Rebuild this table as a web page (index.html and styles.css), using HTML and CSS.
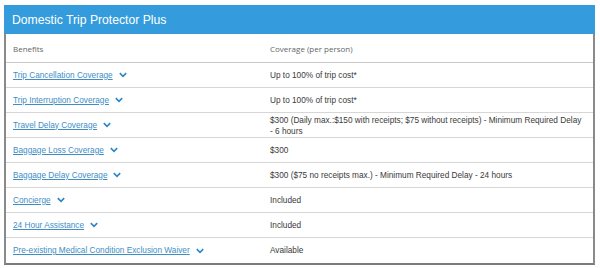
FILE: index.html
```html
<!DOCTYPE html>
<html>
<head>
<meta charset="utf-8">
<link rel="stylesheet" href="styles.css">
</head>
<body>
<div class="card">
  <div class="title">Domestic Trip Protector Plus</div>
  <div class="table">
    <div class="row head">
      <div class="c1">Benefits</div>
      <div class="c2">Coverage (per person)</div>
    </div>
    <div class="row">
      <div class="c1"><a href="#">Trip Cancellation Coverage</a><svg class="chev" viewBox="0 0 10 7"><path d="M1 1.2 L5 5.2 L9 1.2"/></svg></div>
      <div class="c2">Up to 100% of trip cost*</div>
    </div>
    <div class="row">
      <div class="c1"><a href="#">Trip Interruption Coverage</a><svg class="chev" viewBox="0 0 10 7"><path d="M1 1.2 L5 5.2 L9 1.2"/></svg></div>
      <div class="c2">Up to 100% of trip cost*</div>
    </div>
    <div class="row">
      <div class="c1"><a href="#">Travel Delay Coverage</a><svg class="chev" viewBox="0 0 10 7"><path d="M1 1.2 L5 5.2 L9 1.2"/></svg></div>
      <div class="c2 two">$300 (Daily max.:$150 with receipts; $75 without receipts) - Minimum Required Delay <span class="nb">- 6 hours</span></div>
    </div>
    <div class="row">
      <div class="c1"><a href="#">Baggage Loss Coverage</a><svg class="chev" viewBox="0 0 10 7"><path d="M1 1.2 L5 5.2 L9 1.2"/></svg></div>
      <div class="c2">$300</div>
    </div>
    <div class="row">
      <div class="c1"><a href="#">Baggage Delay Coverage</a><svg class="chev" viewBox="0 0 10 7"><path d="M1 1.2 L5 5.2 L9 1.2"/></svg></div>
      <div class="c2">$300 ($75 no receipts max.) - Minimum Required Delay - 24 hours</div>
    </div>
    <div class="row">
      <div class="c1"><a href="#">Concierge</a><svg class="chev" viewBox="0 0 10 7"><path d="M1 1.2 L5 5.2 L9 1.2"/></svg></div>
      <div class="c2">Included</div>
    </div>
    <div class="row">
      <div class="c1"><a href="#">24 Hour Assistance</a><svg class="chev" viewBox="0 0 10 7"><path d="M1 1.2 L5 5.2 L9 1.2"/></svg></div>
      <div class="c2">Included</div>
    </div>
    <div class="row last">
      <div class="c1"><a href="#">Pre-existing Medical Condition Exclusion Waiver</a><svg class="chev" viewBox="0 0 10 7"><path d="M1 1.2 L5 5.2 L9 1.2"/></svg></div>
      <div class="c2">Available</div>
    </div>
  </div>
</div>
</body>
</html>
```

FILE: styles.css
```css
html, body {
  margin: 0;
  padding: 0;
  background: #ffffff;
}
body {
  padding: 5px 5px 0 4px;
  font-family: "Liberation Sans", Arial, sans-serif;
}
.card {
  width: 591px;
}
.title {
  background: #349cdc;
  color: #ffffff;
  height: 29px;
  display: flex;
  align-items: center;
  padding-left: 8px;
  font-size: 12.2px;
  box-sizing: border-box;
}
.table {
  border-left: 2px solid #8a8a8a;
  border-right: 2px solid #8a8a8a;
  border-bottom: 2px solid #7a7a7a;
}
.row {
  display: grid;
  grid-template-columns: 257px 1fr;
  height: 25px;
  box-sizing: border-box;
  border-bottom: 1px solid #d6d6d6;
  font-size: 8.25px;
  color: #3a3a3a;
}
.row.last {
  border-bottom: none;
}
.row.head {
  height: 29px;
  border-bottom: 1px solid #c8c8c8;
  font-family: "Open Sans", sans-serif;
  font-size: 8px;
  color: #666;
}
.c1, .c2 {
  display: flex;
  align-items: center;
  padding-left: 7px;
}
.c2.two {
  display: block;
  padding-top: 2px;
  line-height: 11px;
  padding-right: 2px;
}
.nb {
  white-space: nowrap;
}
a {
  color: #3e8ec6;
  text-decoration: underline;
}
.chev {
  width: 8px;
  height: 6px;
  margin-left: 6px;
  fill: none;
  stroke: #2f86c4;
  stroke-width: 2;
}
```
